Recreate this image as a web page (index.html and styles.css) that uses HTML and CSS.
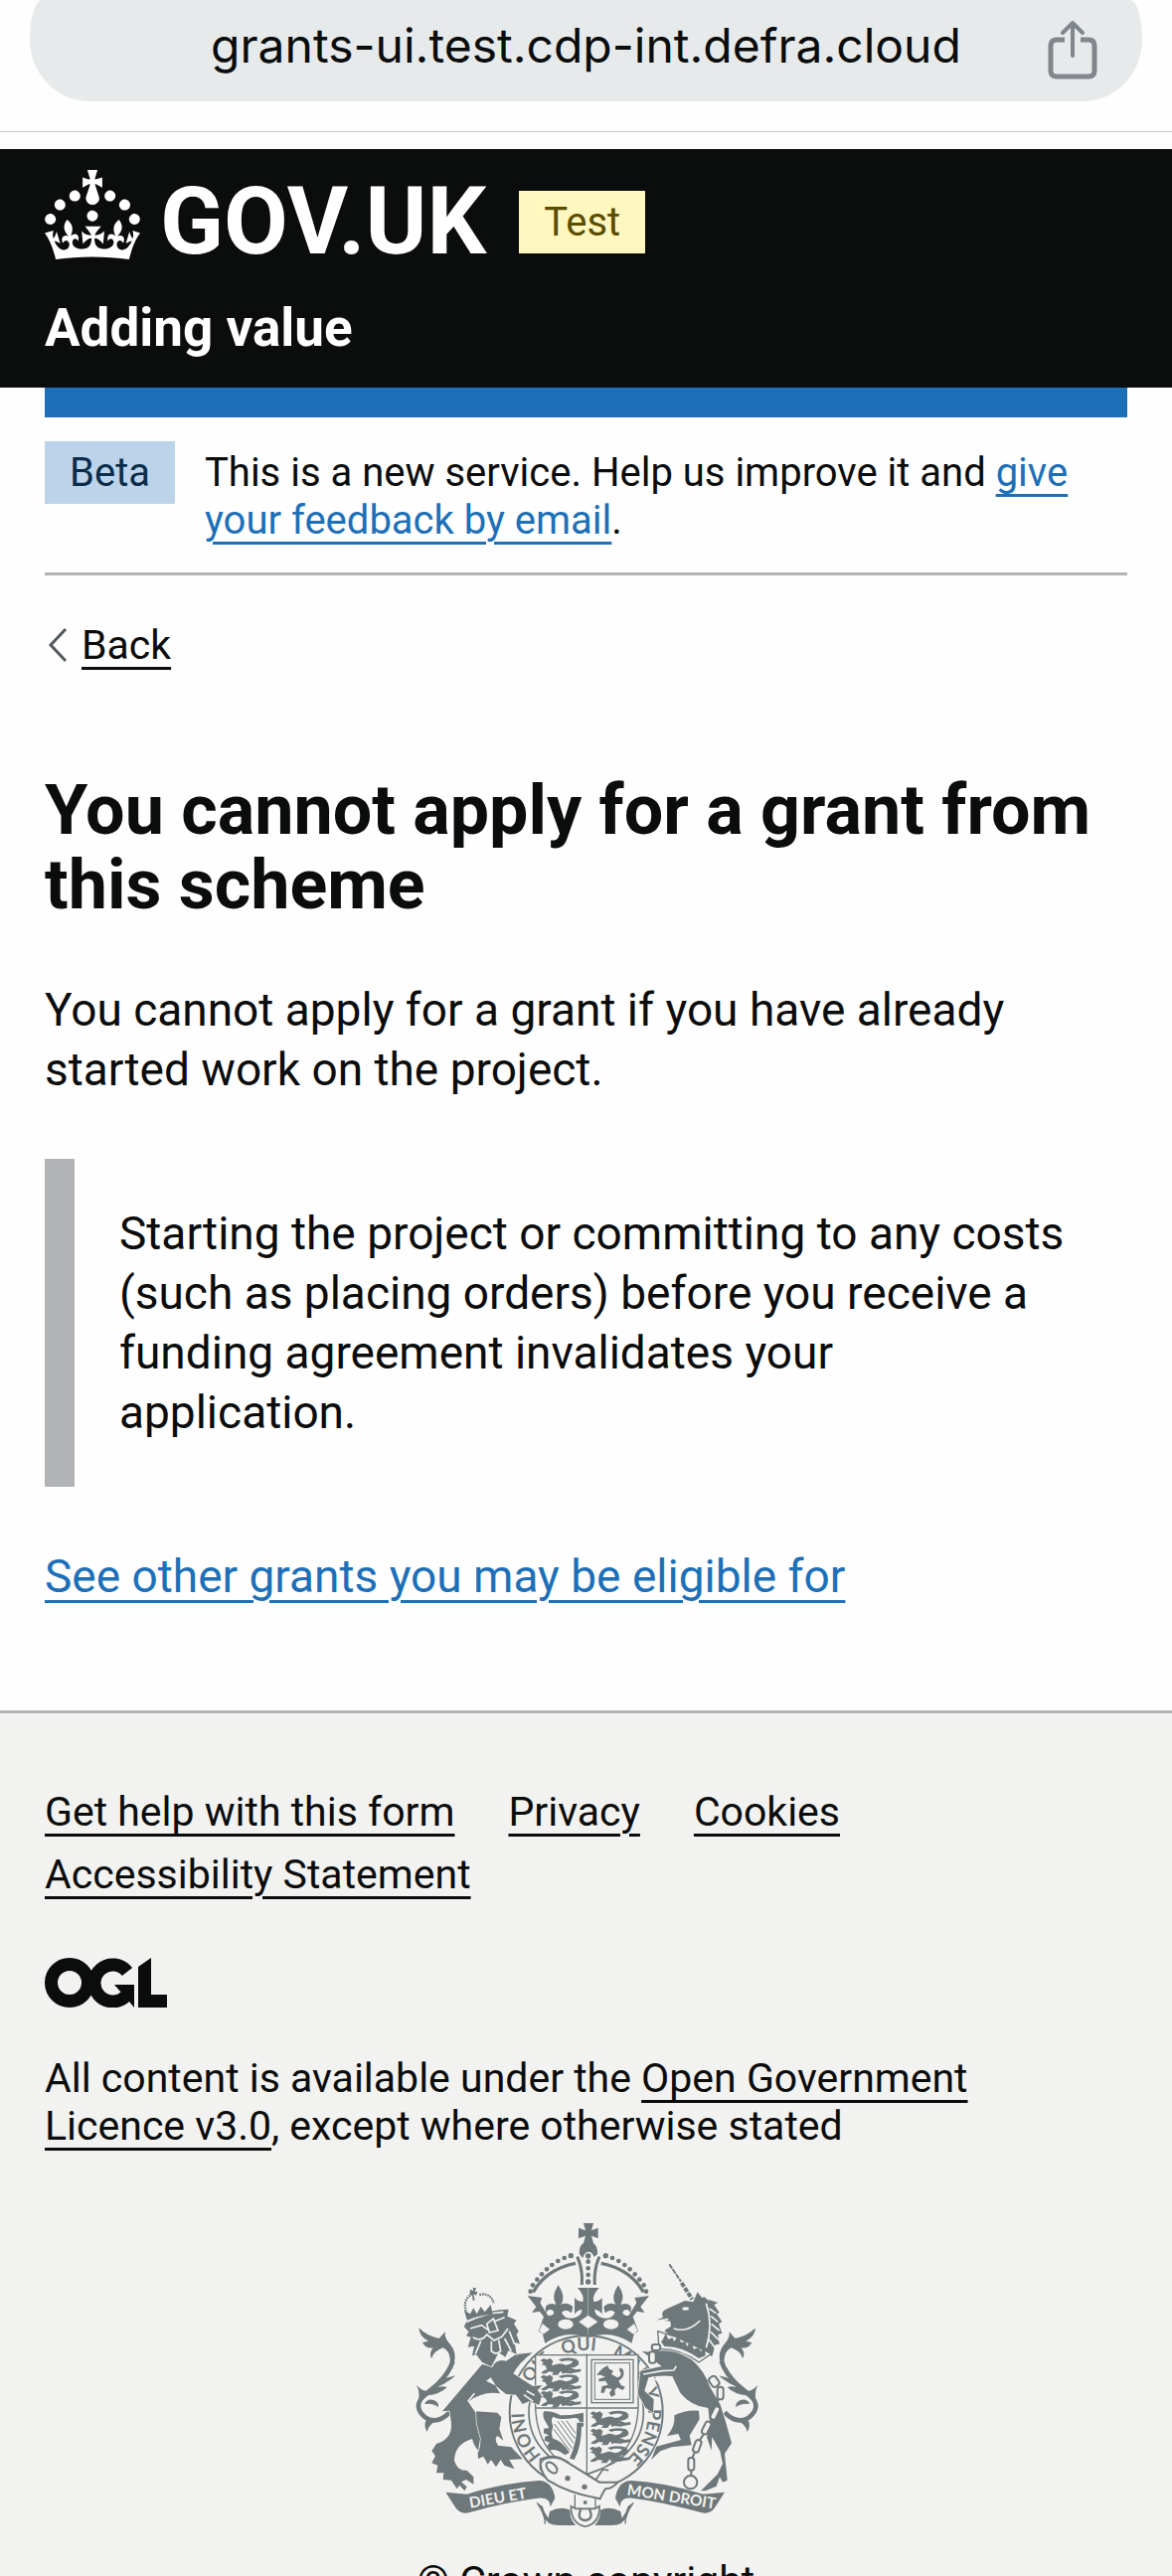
FILE: index.html
```html
<!DOCTYPE html>
<html lang="en">
<head>
<meta charset="utf-8">
<meta name="viewport" content="width=device-width, initial-scale=1">
<title>You cannot apply for a grant from this scheme - Adding value</title>
<link rel="stylesheet" href="styles.css">
</head>
<body>
<div class="browser-bar">
  <div class="address">
    <span class="address-url">grants-ui.test.cdp-int.defra.cloud</span>
    <button class="share" type="button" aria-label="Share">
      <svg width="50" height="60" viewBox="0 0 50 60" fill="none" stroke="currentColor" stroke-width="5" stroke-linecap="round" stroke-linejoin="round"><path d="M25 36V4M15 13L25 3l10 10" stroke-width="4"/><path d="M17 20H9q-6 0-6 6v25q0 6 6 6h32q6 0 6-6V26q0-6-6-6h-8" stroke-linecap="butt"/></svg>
    </button>
  </div>
</div>

<header class="header">
  <div class="header-brand">
    <a class="logo" href="#">
      <svg class="crown" viewBox="0 0 32 30" fill="currentColor" aria-hidden="true"><path fill-rule="evenodd" d="M22.6 10.4c-1 .4-2-.1-2.4-1-.4-.9.1-2 1-2.4.9-.4 2 .1 2.4 1s-.1 2-1 2.4m-5.9 6.7c-.9.4-2-.1-2.4-1-.4-.9.1-2 1-2.4.9-.4 2 .1 2.4 1s-.1 2-1 2.4m10.8-3.7c-1 .4-2-.1-2.4-1-.4-.9.1-2 1-2.4.9-.4 2 .1 2.4 1s0 2-1 2.4m3.3 4.8c-1 .4-2-.1-2.4-1-.4-.9.1-2 1-2.4.9-.4 2 .1 2.4 1s-.1 2-1 2.4M17 4.7l2.3 1.2V2.5l-2.3.7-.2-.2.9-3h-3.4l.9 3-.2.2c-.1.1-2.3-.7-2.3-.7v3.4L15 4.7c.1.1.1.2.2.2l-1.3 4c-.1.2-.1.4-.1.6 0 1.1.8 2 1.9 2.2h.7c1-.2 1.9-1.1 1.9-2.1 0-.2 0-.4-.1-.6l-1.3-4c-.1-.2 0-.2.1-.3m-7.6 5.7c.9.4 2-.1 2.4-1 .4-.9-.1-2-1-2.4-.9-.4-2 .1-2.4 1s0 2 1 2.4m-5 3c.9.4 2-.1 2.4-1 .4-.9-.1-2-1-2.4-.9-.4-2 .1-2.4 1s.1 2 1 2.4m-3.2 4.8c.9.4 2-.1 2.4-1 .4-.9-.1-2-1-2.4-.9-.4-2 .1-2.4 1s0 2 1 2.4m14.8 11c4.4 0 8.6.3 12.3.8 1.1-4.5 2.4-7 3.7-8.8l-2.5-.9c.2 1.3.3 1.9 0 2.7-.4-.4-.8-1.1-1.1-2.3l-1.2 4c.7-.5 1.3-.8 2-.9-1.1 2.5-2.6 3.1-3.5 3-1.1-.2-1.7-1.2-1.5-2.1.3-1.2 1.5-1.5 2.1-.1 1.1-2.3-.8-3-2-2.3 1.9-1.9 2.1-3.5.6-5.6-2.1 1.6-2.1 3.2-1.2 5.5-1.2-1.4-3.2-.6-2.5 1.6.9-1.4 2.1-.5 1.9.8-.2 1.1-1.7 2.1-3.5 1.9-2.7-.2-2.9-2.1-2.9-3.6.7-.1 1.9.5 2.9 1.9l.4-4.3c-1.1 1.1-2.1 1.4-3.2 1.4.4-1.2 2.1-3 2.1-3h-5.4s1.7 1.9 2.1 3c-1.1 0-2.1-.2-3.2-1.4l.4 4.3c1-1.4 2.2-2 2.9-1.9-.1 1.5-.2 3.4-2.9 3.6-1.9.2-3.4-.8-3.5-1.9-.2-1.3 1-2.2 1.9-.8.7-2.3-1.2-3-2.5-1.6.9-2.2.9-3.9-1.2-5.5-1.5 2-1.3 3.7.6 5.6-1.2-.7-3.1 0-2 2.3.6-1.4 1.8-1.1 2.1.1.2.9-.3 1.9-1.5 2.1-.9.2-2.4-.5-3.5-3 .6 0 1.2.3 2 .9l-1.2-4c-.3 1.1-.7 1.9-1.1 2.3-.3-.8-.2-1.4 0-2.7l-2.9.9C1.3 23 2.6 25.5 3.7 30c3.7-.5 7.9-.8 12.3-.8"/></svg>
      <span class="logo-text">GOV.UK</span>
    </a>
    <strong class="tag tag-yellow">Test</strong>
  </div>
  <a class="service-name" href="#">Adding value</a>
</header>

<div class="container">
  <div class="blue-bar"></div>
  <div class="phase-banner">
    <strong class="tag tag-blue">Beta</strong>
    <p class="phase-text">This is a new service. Help us improve it and <a class="link" href="#">give your feedback by email</a>.</p>
  </div>
  <a class="back" href="#">
    <svg class="back-arrow" viewBox="0 0 24 36" fill="none" stroke="currentColor" stroke-width="3" aria-hidden="true"><path d="M21 2L6 18l15 16"/></svg>
    <span class="back-text">Back</span>
  </a>
  <main class="main">
    <h1 class="heading">You cannot apply for a grant from this scheme</h1>
    <p class="body-text">You cannot apply for a grant if you have already started work on the project.</p>
    <div class="inset">Starting the project or committing to any costs (such as placing orders) before you receive a funding agreement invalidates your application.</div>
    <p class="body-text"><a class="link" href="#">See other grants you may be eligible for</a></p>
  </main>
</div>

<footer class="footer">
  <ul class="footer-links">
    <li><a href="#">Get help with this form</a></li>
    <li><a href="#">Privacy</a></li>
    <li><a href="#">Cookies</a></li>
    <li><a href="#">Accessibility Statement</a></li>
  </ul>
  <svg class="ogl" viewBox="0 0 123 50" role="img" aria-label="Open Government Licence">
    <g fill="none" stroke="currentColor" stroke-width="13">
      <circle cx="25" cy="25" r="18.500"/>
      <path d="M83 14A18.500 18.500 0 1 0 81 39"/>
    </g>
    <path fill="currentColor" d="M70 27H90V50L85 44L75 44L77 35ZM94 9L107 0V37H123V50H94Z"/>
  </svg>
  <p class="licence">All content is available under the <a href="#">Open Government Licence v3.0</a>, except where otherwise stated</p>
  <a class="copyright" href="#">
    <svg class="crest" viewBox="51 54 1044 918" aria-hidden="true">
      <defs>
        <path id="garter-line" d="M572 812A187 187 0 0 1 572 438A187 187 0 0 1 572 812"/>
        <g id="passant">
          <path d="M0 6l10-6 8 4 12-4 8 8-4 14 14-4q14-6 28 2 18-2 22-12-20-4-34 2l-10-6q24-10 54-2 12 8 6 18-12 10-26 8l18 6 16-2v8l-22 4-14-8-26 4-8 10h-18l6-8-14-2-10 6H2l4-6 14-8-6-10-12-4 8-4z"/>
          <path d="M64 36l14-4 10 6 14 2-8 6-18-2-12 2z"/>
        </g>
        <g id="crown-half">
          <path d="M412 262Q452 192 540 175" class="line" stroke-width="10"/>
          <path d="M545 155Q562 190 559 240" class="line" stroke-width="9"/>
          <circle cx="404" cy="260" r="7"/><circle cx="411" cy="241" r="7"/><circle cx="424" cy="224" r="7"/><circle cx="438" cy="208" r="7"/><circle cx="453" cy="193" r="7"/><circle cx="469" cy="180" r="7"/><circle cx="487" cy="168" r="7"/><circle cx="506" cy="159" r="7"/><circle cx="526" cy="152" r="8"/>
          <path d="M395 273l44 6-6 16 24 38q14 2 18-8-2-12-16-10l-8 8q-8-24 16-26l14 2q-16-24 7-58 24 36 8 58 22-8 36 8l-4 18q-16-14-30-2 6 18 30 18 28-2 32-26-14 0-23 14v-50q10 12 25 12 6-18-16-42h32v150Q510 374 448 416l-8-28-12-8 16-44z"/>
          <path d="M432 292l-24 32 24-4 16 20z"/>
          <g class="paper"><ellipse cx="510" cy="359" rx="23" ry="15"/><path d="M440 357l22 18-20 14-12-10z"/></g>
        </g>
        <g id="tail">
          <path d="M160 625Q122 664 86 640Q48 608 82 575L122 542Q158 506 170 470" class="line" stroke-width="14"/>
          <path d="M67 370Q90 394 128 402L146 382Q144 402 162 420Q184 446 172 480L158 500Q170 444 140 430Q112 440 106 462Q96 448 110 430Q88 434 78 414L96 410Q68 396 67 370ZM60 542Q74 560 92 560L132 526 178 514Q150 540 112 552 142 542 152 550 128 572 94 574L62 604Q74 570 60 542ZM84 600Q92 582 112 588 128 594 126 610 112 596 84 600ZM92 684Q80 666 90 646L132 646Q98 656 92 684Z"/>
        </g>
        <g id="scroll">
          <path d="M148 866L212 872Q330 836 430 831 470 832 478 884L464 910Q464 880 426 884 330 896 218 928 190 934 176 910Z"/>
          <path d="M424 898Q436 912 442 936 452 966 490 966H540Q520 942 524 920 496 906 462 924L458 944Q444 926 440 908Z"/>
          <path d="M448 962Q450 936 424 898" class="line" stroke-width="4"/>
        </g>
      </defs>
      <g fill="currentColor">
        <circle cx="572" cy="625" r="231" class="paper-line" stroke-width="6"/>
        <circle cx="572" cy="625" r="173" class="line" stroke-width="5"/>
        <g class="garter-text">
          <text><textPath href="#garter-line" startOffset="150">HONI</textPath></text>
          <text><textPath href="#garter-line" startOffset="355">SOIT</textPath></text>
          <text><textPath href="#garter-line" startOffset="516">QUI</textPath></text>
          <text><textPath href="#garter-line" startOffset="665">MAL</textPath></text>
          <text><textPath href="#garter-line" startOffset="810">Y</textPath></text>
          <text><textPath href="#garter-line" startOffset="870">PENSE</textPath></text>
        </g>
        <use href="#crown-half"/>
        <use href="#crown-half" transform="translate(1157 0) scale(-1 1)"/>
        <path d="M564 54h30l-6 22 20-8v32l-20-8 6 22h-30l6-22-21 8V68l21 8z"/>
        <path d="M552 148Q548 112 579 110 608 112 606 148L596 156Q590 140 578 140 566 142 562 160Z"/>
        <circle cx="578" cy="153" r="8"/><circle cx="578" cy="170" r="7"/><circle cx="578" cy="190" r="7"/><circle cx="578" cy="210" r="7"/><circle cx="578" cy="231" r="8"/>
        <path class="paper" d="M550 352l28-20 29 20-29 20z"/>

        <path class="paper-line" stroke-width="4" d="M419 452H729V612Q722 770 574 812 426 770 419 612Z"/>
        <path class="line" stroke-width="4" d="M574 452V812M419 612H729"/>
        <use href="#passant" x="434" y="462"/><use href="#passant" x="434" y="512"/><use href="#passant" x="434" y="560"/>
        <use href="#passant" x="584" y="622"/><use href="#passant" x="584" y="674"/><use href="#passant" x="582" y="728"/>
        <rect class="line" x="588" y="466" width="126" height="130" stroke-width="4"/>
        <rect class="line" x="598" y="476" width="106" height="110" stroke-width="3"/>
        <path d="M622 492l14-8 6 10 12 6-6 10 18 10q14-4 10-16-8-6 0-14 16 10 6 30l-12 10 8 14 12 4-8 10-16-8-8 8 2 14-12 6-6-10 8-14-18-2-6 14h-10l4-20 18-4-8-12-20 2v-8l20-6-14-6h-12l6-8z"/>
        <path fill-rule="evenodd" d="M444 622q26-2 50 12 36 0 70-8v28h-12q-2-14-16-12-44 8-64-4-8 8 0 30-8 20 0 36 24 4 50 42l-14 8q-28-22-46-14l-8-14 8-10-16-6 2-12 12-4-16-6v-14l16-2-8-14q-14-20-8-36zM544 656h20v12h-6q0 60-22 100l-14-4q22-50 22-96z"/>
        <path class="line" stroke-width="3" d="M476 660l54 74M486 652l48 66M498 650l40 54M512 650l28 38M474 676l48 64"/>

        <g class="outlined">
          <use href="#tail"/>
          <path d="M235 622L304 626 316 640 310 675 322 710 305 696Q292 704 306 725L346 730 380 766 340 768 356 796 325 785 314 768 300 790 285 768 275 782 262 758 246 765 245 745Q262 720 242 680Z"/>
          <path d="M258 480L290 488Q300 462 330 470L360 450 410 445Q370 475 352 508L410 545 440 544 425 558 438 575 430 602 400 592 380 600 360 572 330 570 300 545 284 520 270 530 298 544 312 568Q260 560 218 592L238 625 240 660 252 705 246 740Q232 724 228 705 176 720 174 770 184 804 212 800L232 820 232 842 210 828 195 835 212 850 205 862 190 845 182 856 165 830 140 828 142 808 120 808 124 785 106 778 117 757 106 742 120 720Q172 705 164 650L160 620 138 622Z"/>
          <path d="M203 366L215 345 260 325 310 316 338 314 334 335 362 347 354 357 368 380 362 390 372 418 356 414 362 450 338 438 328 458 308 445 286 487 258 474 240 450 228 454 234 425 215 428 224 398 210 394 218 382Z"/>
        </g>
        <path class="cut" d="M212 352Q260 326 322 322M222 372l34-10 20 14M292 352l34-14M272 358l20-16 14 36-26 6zM230 398q26 16 42-8l22 18 24-12 18-24M286 410v30q14 14 28 0l-6-34M254 410l-16 38M340 380l16 40M326 402l20 38M215 592l20-24M218 592l22 32M392 560l24 14M384 572l28 20"/>
        <path d="M212 328Q196 286 226 270M250 270Q282 262 294 296" class="line" stroke-width="7" stroke-dasharray="5 3"/>
        <path d="M212 346l-8-28 18 10 10-18 10 18 12-22 12 16 18-22 6 30q-44 2-78 16zM222 254l10 4-2-10 10 2-4 10 8 2-4 10-8-4 4 18-6 2-2-18-8 2z"/>

        <g class="outlined">
          <use href="#tail" transform="translate(1150 0) scale(-1 1)"/>
          <path d="M838 634Q874 616 912 620L914 646 884 695 890 724 830 730 796 742 768 768 784 728 858 708 850 690 816 696Q842 668 838 634Z"/>
          <path d="M740 440Q780 446 785 440 840 432 890 466 930 500 946 550L976 600 992 650 1011 718 990 750 998 830 984 836 975 820 965 848 932 862 918 862 968 812 984 780 976 742 952 700 950 740 936 700 946 660 940 612Q888 606 856 566L832 516Q796 512 760 520L748 560 776 586 774 626 752 612 728 570 736 500 800 486Z"/>
          <path d="M785 346L804 338Q796 322 812 314L870 288 895 292 908 262 922 280 928 276 946 292 940 284 970 294 958 300 974 324 966 328 982 352 972 358 982 386 970 390 974 420 962 420 952 456 835 402 808 378 828 365 826 350Z"/>
        </g>
        <path class="cut" d="M934 296q22 64 0 134M944 312l20 14M948 334l22 18M950 358l24 20M948 382l24 24M942 404l20 28M790 348l30-4M836 372q42 14 80-24M744 510l56-10 36-2 8-12M770 518l20 14"/>
        <ellipse class="paper" cx="872" cy="312" rx="10" ry="5"/>
        <path class="line" stroke-width="6" stroke-dasharray="15 3" d="M823 178L858 230"/>
        <path class="line" stroke-width="12" stroke-dasharray="14 4" d="M860 234L892 284"/>
        <path class="paper-line" stroke-width="4" d="M788 380L840 396 950 448 912 474Q856 432 792 434Z"/>
        <path d="M804 404l8-18 8 18 12-4 6 10 12-18 8 22 14-2 4 14 14-20 6 28 16-4 6 12 12-18 2 30-20 8q-54-38-104-36l-10-14z"/>
        <g class="chain">
          <rect x="762" y="442" width="20" height="34" rx="8"/><rect x="770" y="420" width="26" height="18" rx="8"/>
          <rect x="946" y="516" width="24" height="32" rx="9" transform="rotate(-35 958 532)"/>
          <rect x="968" y="548" width="18" height="38" rx="8"/>
          <rect x="952" y="606" width="18" height="42" rx="8" transform="rotate(26 961 627)"/>
          <rect x="926" y="652" width="18" height="40" rx="8" transform="rotate(26 935 672)"/>
          <rect x="898" y="708" width="18" height="38" rx="8" transform="rotate(20 907 727)"/>
          <rect x="880" y="762" width="18" height="38" rx="8"/>
          <circle cx="887" cy="836" r="20"/>
          <path d="M971 586l-5 18M951 648l-6 8M926 692l-12 18M900 746l-8 16M889 800v16"/>
        </g>

        <path class="paper-line" stroke-width="6" d="M434 766Q470 752 496 764L612 836 668 836Q650 856 630 856 620 872 614 886 520 870 456 830 430 800 434 766Z"/>
        <ellipse class="line" cx="468" cy="792" rx="20" ry="12" stroke-width="6" transform="rotate(45 468 792)"/>
        <path class="line" stroke-width="5" d="M434 800Q430 768 452 764 484 756 520 776M574 812L616 796 640 800M600 830L622 798"/>
        <circle cx="516" cy="824" r="8"/><circle cx="567" cy="850" r="8"/>
        <path class="paper-line" stroke-width="4" d="M538 874V916H600V886"/>
        <circle cx="569" cy="897" r="6"/>
        <use href="#scroll"/>
        <use href="#scroll" transform="translate(1138 0) scale(-1 1)"/>
        <path class="paper-line" stroke-width="5" d="M526 908L540 916H598L612 908Q614 960 569 970 526 960 526 908Z"/>
        <path class="line" stroke-width="7" d="M556 918Q542 948 569 951 596 948 582 918"/>
        <g class="motto">
          <text x="222" y="914" transform="rotate(-10 222 914)">DIEU ET</text>
          <text x="694" y="874" transform="rotate(9 694 874)">MON DROIT</text>
        </g>
      </g>
    </svg>
    <span class="copyright-text">© Crown copyright</span>
  </a>
</footer>
</body>
</html>
```
FILE: styles.css
```css
:root {
  --ink: #0b0c0c;
  --blue: #1d70b8;
  --grey: #b1b4b6;
  --paper: #f2f2f0;
  --gutter: 45px;
}

* { box-sizing: border-box; }

html { height: 100%; overflow: hidden; }

body {
  margin: 0;
  height: 100%;
  overflow: hidden;
  background: #fefefe;
  color: var(--ink);
  font-family: Roboto, "Open Sans", sans-serif;
}

a {
  color: inherit;
  text-decoration-thickness: 3px;
  text-underline-offset: 8px;
}

.link { color: var(--blue); }

.browser-bar {
  padding: 0 30px 30px;
  border-bottom: 1px solid #c8c9ca;
  margin-bottom: 17px;
}

.address {
  position: relative;
  display: flex;
  justify-content: center;
  align-items: flex-end;
  height: 102px;
  padding-bottom: 26px;
  border-radius: 12px 12px 60px 60px / 40px 40px 62px 62px;
  background: #e6eaeb;
}

.address-url {
  font: 400 48px/60px Inter, sans-serif;
  color: #0b0c0c;
}

.share {
  position: absolute;
  right: 45px;
  bottom: 22px;
  display: flex;
  padding: 0;
  border: 0;
  background: none;
  color: #80868b;
}

.header {
  padding: 21px var(--gutter) 30px;
  background: var(--ink);
  color: #fff;
}

.header-brand {
  display: flex;
  align-items: flex-start;
  gap: 33px;
}

.logo {
  display: flex;
  align-items: flex-start;
  gap: 20px;
  color: #fff;
  text-decoration: none;
}

.crown { width: 96px; height: 90px; }

.logo-text {
  font-size: 94px;
  font-weight: 700;
  line-height: 105px;
}

.tag {
  padding: 8px 25px 7px;
  font-size: 40px;
  font-weight: 400;
  line-height: 48px;
}

.tag-yellow {
  margin-top: 21px;
  background: #fff7bf;
  color: #594d00;
}

.tag-blue {
  background: #bbd4ea;
  color: #0c2d4a;
}

.service-name {
  display: block;
  margin-top: 24px;
  color: #fff;
  font-size: 53px;
  font-weight: 700;
  line-height: 60px;
  text-decoration: none;
}

.container { padding: 0 var(--gutter); }

.blue-bar { height: 30px; background: var(--blue); }

.phase-banner {
  display: flex;
  align-items: flex-start;
  gap: 30px;
  padding: 24px 0 28px;
  border-bottom: 3px solid var(--grey);
}

.phase-text {
  margin: 8px 0 0;
  font-size: 40px;
  line-height: 48px;
}

.back {
  display: inline-flex;
  align-items: center;
  gap: 13px;
  margin-top: 46px;
  font-size: 41px;
  line-height: 48px;
  text-decoration: none;
}

.back-arrow { width: 24px; height: 36px; color: #505a5f; }

.back-text {
  text-decoration: underline 3px;
  text-underline-offset: 8px;
}

.main { padding: 105px 0 60px; }

.heading {
  margin: 0 0 58px;
  font-size: 70px;
  font-weight: 700;
  line-height: 75px;
}

.body-text {
  margin: 0 0 45px;
  font-size: 46px;
  line-height: 60px;
}

.inset {
  margin: 60px 0;
  padding: 45px 55px 45px 45px;
  border-left: 30px solid var(--grey);
  font-size: 46px;
  line-height: 60px;
}

.footer {
  padding: 75px var(--gutter);
  border-top: 3px solid var(--grey);
  background: var(--paper);
  font-size: 41px;
  line-height: 48px;
}

.footer-links {
  display: flex;
  flex-wrap: wrap;
  gap: 15px 54px;
  margin: 0 0 60px;
  padding: 0;
  list-style: none;
}

.ogl { display: block; width: 123px; height: 50px; }

.licence { margin: 47px 0 74px; padding-right: 90px; }

.copyright {
  display: flex;
  flex-direction: column;
  align-items: center;
  gap: 30px;
  text-decoration: none;
}

.crest { width: 348px; height: 306px; color: #6e787a; }

.crest .line { fill: none; stroke: currentColor; }
.crest .paper { fill: var(--paper); }
.crest .paper-line { fill: var(--paper); stroke: currentColor; }
.crest .cut { fill: none; stroke: var(--paper); stroke-width: 5px; }
.crest .outlined > path { stroke: var(--paper); stroke-width: 4px; paint-order: stroke; }
.crest .chain { fill: var(--paper); stroke: currentColor; stroke-width: 6px; }
.crest .garter-text { font: 700 54px Lato, sans-serif; }
.crest .motto { fill: var(--paper); font: 700 46px Lato, sans-serif; }
```
